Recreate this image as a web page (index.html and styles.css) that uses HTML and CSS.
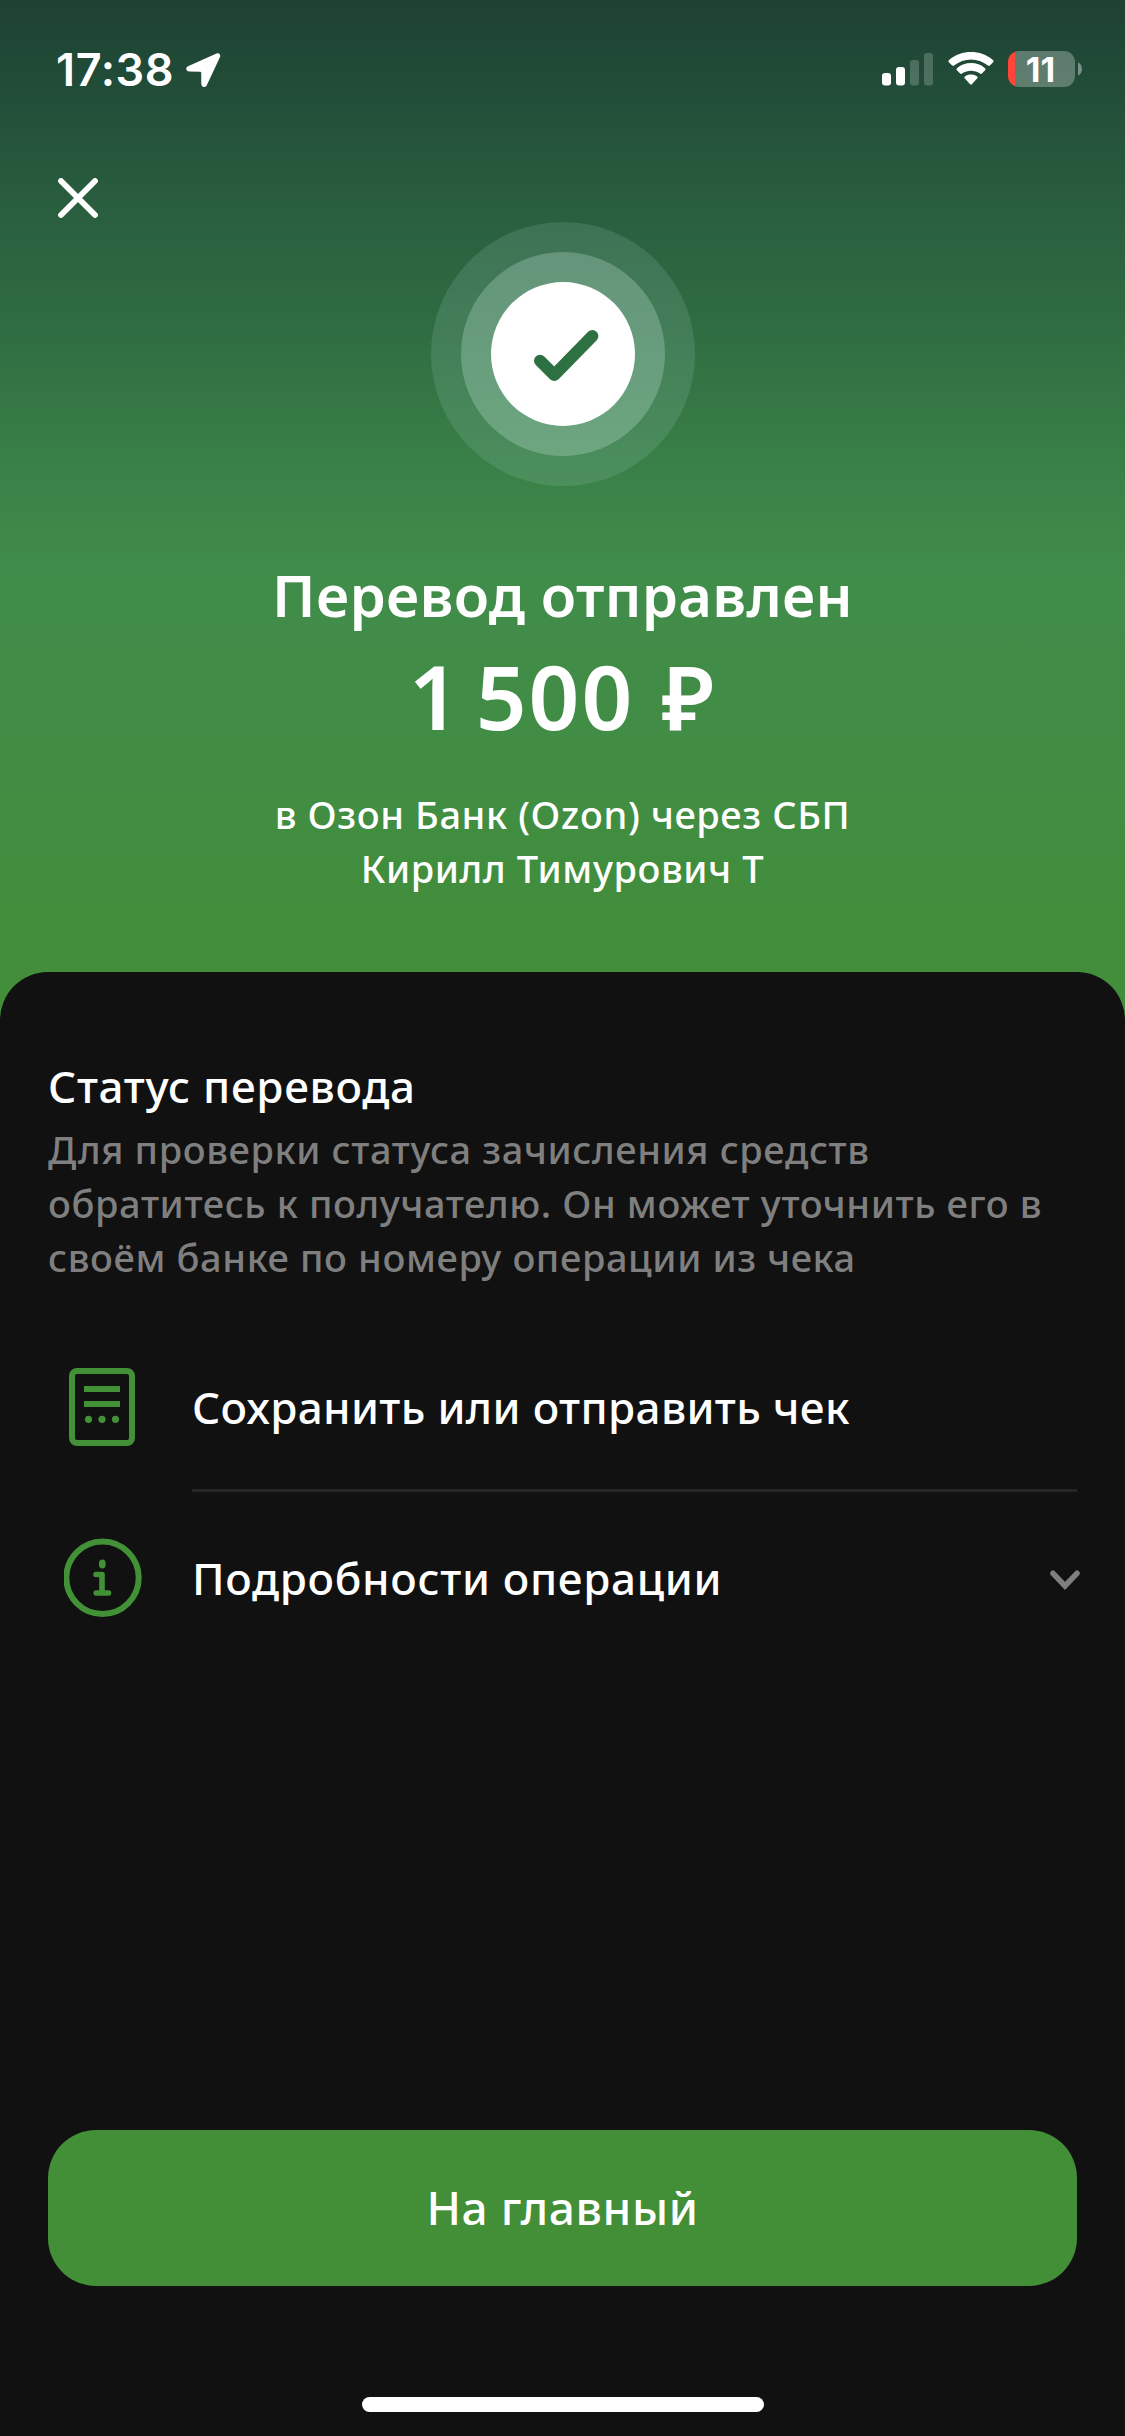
FILE: index.html
```html
<!DOCTYPE html>
<html lang="ru">
<head>
<meta charset="utf-8">
<title>Перевод отправлен</title>
<link rel="stylesheet" href="styles.css">
</head>
<body>
<div class="screen">
  <header class="statusbar">
    <div class="clock">
      <span class="time">17:38</span>
      <svg class="location" width="36" height="36" viewBox="0 0 36 36"><path d="M31.500 1.500 3 14.200C.2 15.500.9 19.500 4.200 19.600L15 19.800Q16.200 19.800 16.200 21L16.300 32C16.400 35.600 20.600 36 21.900 33L35 5C36.100 2.500 34 .4 31.500 1.500Z" fill="#fff"/></svg>
    </div>
    <div class="indicators">
      <svg class="signal" width="52" height="34" viewBox="0 0 52 34"><g fill="#fff"><rect x="0" y="20" width="9" height="12.500" rx="3"/><rect x="14" y="14" width="9" height="18.500" rx="3"/><g opacity=".2"><rect x="28" y="7" width="9" height="25.500" rx="3"/><rect x="42" y="0" width="9" height="32.500" rx="3"/></g></g></svg>
      <svg class="wifi" width="46" height="34" viewBox="0 0 46 34"><g fill="#fff"><path d="M1.100 10.500Q-.2 9.200 1.100 8C13.500-2.600 32.500-2.600 44.900 8Q46.200 9.200 44.900 10.500L41.900 13.400Q41 14.300 39.900 13.400C30 5.400 16 5.400 6.100 13.400Q5 14.300 4.100 13.400Z"/><path d="M8.900 18.300Q7.800 17.200 9 16.200C17 9.400 29 9.400 37 16.200Q38.200 17.200 37.100 18.300L33.900 21.400Q33 22.300 31.900 21.500C26.600 17.700 19.400 17.700 14.100 21.500Q13 22.300 12.100 21.400Z"/><path d="M16.700 26.200Q15.700 25.200 16.900 24.400C20.500 21.900 25.500 21.900 29.100 24.400Q30.300 25.200 29.300 26.200L24.100 31.900Q23 33 21.900 31.900Z"/></g></svg>
      <div class="battery"><span class="battery-body">11</span><svg width="4" height="14" viewBox="0 0 4 14"><path d="M0 .5C5.300 2.500 5.300 11.500 0 13.500Z" fill="#fff" opacity=".4"/></svg></div>
    </div>
  </header>

  <nav class="toolbar">
    <svg width="40" height="40" viewBox="0 0 40 40"><path d="M3 3 37 37M37 3 3 37" fill="none" stroke="#fff" stroke-width="5.800" stroke-linecap="round"/></svg>
  </nav>

  <section class="hero">
    <svg class="badge" width="264" height="264" viewBox="0 0 264 264"><circle cx="132" cy="132" r="132" fill="#b8e0d8" opacity=".15"/><circle cx="132" cy="132" r="102" fill="#e0fff8" opacity=".23"/><circle cx="132" cy="132" r="72" fill="#fff"/><path d="M109 138.700 123.300 153 161.400 114" fill="none" stroke="#2d7143" stroke-width="12" stroke-linecap="round" stroke-linejoin="round"/></svg>
    <h1 class="title">Перевод отправлен</h1>
    <p class="amount"><span class="thousands">1 </span>500 ₽</p>
    <p class="recipient">в Озон Банк (Ozon) через СБП<br>Кирилл Тимурович Т</p>
  </section>

  <main class="sheet">
    <section class="status">
      <h2 class="status-title">Статус перевода</h2>
      <p class="status-text">Для проверки статуса зачисления средств<br>обратитесь к получателю. Он может уточнить его в<br>своём банке по номеру операции из чека</p>
    </section>
    <div class="actions">
      <div class="action">
        <svg width="84" height="84" viewBox="0 0 84 84"><rect x="8" y="6" width="60" height="72" rx="5" fill="none" stroke="#429137" stroke-width="6"/><path d="M20 24H56M20 39H56" stroke="#429137" stroke-width="6"/><g fill="#429137"><circle cx="24.500" cy="54.300" r="3.600"/><circle cx="38" cy="54.300" r="3.600"/><circle cx="51.500" cy="54.300" r="3.600"/></g></svg>
        <span class="label label-save">Сохранить или отправить чек</span>
      </div>
      <hr class="divider">
      <div class="action action-details">
        <svg width="84" height="84" viewBox="0 0 84 84"><circle cx="38.500" cy="41.700" r="36.200" fill="none" stroke="#429137" stroke-width="6"/><ellipse cx="38.300" cy="28" rx="3.400" ry="4.500" fill="#429137"/><path d="M32 38.500H38V57M32.200 57H44.500" fill="none" stroke="#429137" stroke-width="5.600" stroke-linecap="round" stroke-linejoin="round"/></svg>
        <span class="label label-details">Подробности операции</span>
        <svg class="chevron" width="32" height="24" viewBox="0 0 32 24"><path d="M4 4.300 16 17 28 4.300" fill="none" stroke="#7f7f7f" stroke-width="5.600" stroke-linecap="round"/></svg>
      </div>
    </div>
    <button class="primary" type="button">На главный</button>
    <div class="home-indicator"></div>
  </main>
</div>
</body>
</html>
```

FILE: styles.css
```css
* {
  box-sizing: border-box;
  margin: 0;
  padding: 0;
}

body {
  background: #111;
  color: #fff;
  font-family: "Noto Sans", "Open Sans", sans-serif;
}

svg {
  display: block;
  flex: none;
}

.screen {
  display: flex;
  flex-direction: column;
  width: 1125px;
  height: 2436px;
  overflow: hidden;
  background: linear-gradient(#1e4133 0, #214d38 90px, #295d3e 200px, #2f6d42 330px, #3a8248 480px, #408c4a 570px, #418d44 760px, #428e3a 960px, #428e3a 100%);
}

.statusbar {
  display: flex;
  justify-content: space-between;
  height: 130px;
  padding: 50px 43px 0 56px;
}

.clock {
  display: flex;
  gap: 11px;
}

.time {
  height: 40px;
  font: 600 45px/40px Inter, sans-serif;
  letter-spacing: 0.6px;
}

.location {
  margin-top: 2px;
}

.indicators {
  display: flex;
  padding-top: 1px;
}

.signal {
  margin: 2px 14px 0 0;
}

.wifi {
  margin: 1px 14px 0 0;
}

.battery {
  display: flex;
  align-items: center;
  gap: 3px;
  height: 36px;
}

.battery-body {
  width: 67px;
  height: 36px;
  padding-right: 2px;
  border-radius: 11px;
  background: linear-gradient(90deg, #ff4539 7.500px, rgba(255, 255, 255, 0.28) 7.500px);
  font: 700 34px/37px Inter, sans-serif;
  text-align: center;
}

.toolbar {
  height: 92px;
  padding: 48px 58px 0;
}

.hero {
  display: flex;
  flex-direction: column;
  align-items: center;
  height: 750px;
  text-align: center;
}

.badge {
  margin-left: 1px;
}

.title {
  margin-top: 69px;
  font-size: 58px;
  font-weight: 600;
  letter-spacing: 0.3px;
  line-height: 80px;
}

.amount {
  margin-top: 2px;
  font-size: 89px;
  font-weight: 600;
  letter-spacing: 2px;
  line-height: 118px;
  word-spacing: 2px;
}

.thousands {
  word-spacing: -11px;
}

.recipient {
  margin-top: 32px;
  font-size: 38px;
  font-weight: 500;
  letter-spacing: 0.6px;
  line-height: 54px;
}

.sheet {
  display: flex;
  flex: 1;
  flex-direction: column;
  padding: 84px 48px 24px;
  border-radius: 48px 48px 0 0;
  background: #111;
}

.status-title {
  font-size: 44px;
  font-weight: 500;
  letter-spacing: 0.7px;
  line-height: 60px;
}

.status-text {
  margin-top: 6px;
  color: #7f7f7f;
  font-size: 38px;
  font-weight: 500;
  letter-spacing: 0.6px;
  line-height: 54px;
}

.actions {
  margin-top: 40px;
}

.action {
  display: flex;
  align-items: center;
  height: 165px;
  padding: 0 0 0 16px;
}

.action-details {
  padding-top: 7px;
}

.label {
  flex: 1;
  margin-left: 44px;
  font-size: 44px;
  font-weight: 500;
  line-height: 60px;
}

.label-save {
  letter-spacing: 0.36px;
}

.label-details {
  letter-spacing: 0.68px;
}

.chevron {
  margin: 5px -4px 0 0;
}

.divider {
  height: 3px;
  margin-left: 144px;
  border: 0;
  background: #272727;
}

.primary {
  flex: none;
  height: 156px;
  margin-top: auto;
  padding-bottom: 3px;
  border: 0;
  border-radius: 48px;
  background: #438f38;
  color: #fff;
  font: 500 46px/60px "Noto Sans", "Open Sans", sans-serif;
  letter-spacing: 0.6px;
}

.home-indicator {
  align-self: center;
  flex: none;
  width: 402px;
  height: 15px;
  margin-top: 111px;
  border-radius: 8px;
  background: #fff;
}
```
